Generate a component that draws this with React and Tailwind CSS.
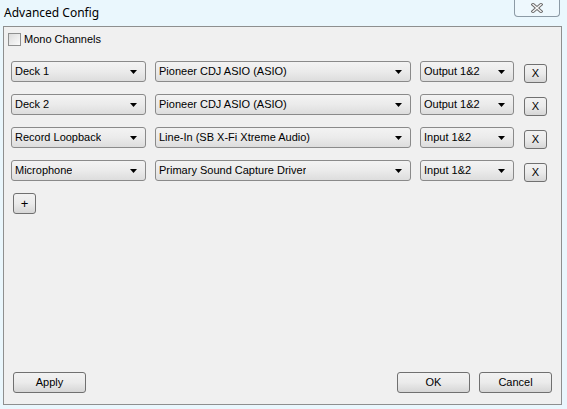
import React from 'react';

const rows = [
  { src: 'Deck 1', dev: 'Pioneer CDJ ASIO (ASIO)', ch: 'Output 1&2' },
  { src: 'Deck 2', dev: 'Pioneer CDJ ASIO (ASIO)', ch: 'Output 1&2' },
  { src: 'Record Loopback', dev: 'Line-In (SB X-Fi Xtreme Audio)', ch: 'Input 1&2' },
  { src: 'Microphone', dev: 'Primary Sound Capture Driver', ch: 'Input 1&2' },
];

function Combo({ label, className }) {
  return (
    <div
      className={`h-[21px] flex items-center justify-between pl-[3px] pr-[8px] border border-[#8a8a8a] rounded-[3px] bg-gradient-to-b from-[#f3f3f3] via-[#ebebeb] to-[#dddddd] text-[11px] text-black ${className}`}
    >
      <span className="truncate">{label}</span>
      <svg width="7" height="4" viewBox="0 0 7 4" className="shrink-0">
        <path d="M0 0 H7 L3.5 4 Z" fill="#000" />
      </svg>
    </div>
  );
}

function Btn({ children, className }) {
  return (
    <div
      className={`flex items-center justify-center border border-[#707070] rounded-[3px] bg-gradient-to-b from-[#f2f2f2] via-[#ebebeb] to-[#d6d6d6] text-[11px] text-black ${className}`}
    >
      {children}
    </div>
  );
}

export default function App() {
  return (
    <div
      className="w-[567px] h-[409px] bg-[#eaf7fd] flex flex-col overflow-hidden"
      style={{ fontFamily: '"Liberation Sans", Arial, sans-serif' }}
    >
      <div className="h-[26px] flex items-start shrink-0">
        <span
          className="ml-[4px] mt-[4px] text-[12px] text-black"
          style={{ fontFamily: '"Noto Sans", sans-serif' }}
        >
          Advanced Config
        </span>
        <div className="ml-auto mr-[7px] w-[46px] h-[17px] border border-t-0 border-[#8c9aa5] rounded-b-[4px] bg-[#eef8fd] flex items-center justify-center">
          <svg width="12" height="10" viewBox="0 0 12 10">
            <path d="M2 1.5 L10 8.5 M10 1.5 L2 8.5" stroke="#6a6a6a" strokeWidth="3.2" strokeLinecap="square" />
            <path d="M2 1.5 L10 8.5 M10 1.5 L2 8.5" stroke="#f6f6f6" strokeWidth="1.4" strokeLinecap="square" />
          </svg>
        </div>
      </div>

      <div className="ml-[3px] w-[559px] h-[379px] border border-[#8e8f8f] bg-[#f0f0f0] flex flex-col">
        <div className="flex items-center h-[13px] ml-[4px] mt-[6px]">
          <div className="w-[13px] h-[13px] border border-[#8e8f8f] bg-gradient-to-br from-[#dcdcdc] to-[#fbfbfb]" />
          <span className="ml-[3px] text-[11px] leading-[13px] text-black">Mono Channels</span>
        </div>

        <div className="flex flex-col gap-[12px] mt-[15px] ml-[7px]">
          {rows.map((r, i) => (
            <div key={i} className="flex items-start h-[21px]">
              <Combo label={r.src} className="w-[135px]" />
              <Combo label={r.dev} className="w-[256px] ml-[9px]" />
              <Combo label={r.ch} className="w-[94px] ml-[9px]" />
              <Btn className="w-[23px] h-[19px] ml-[10px] mt-[3px] shrink-0">X</Btn>
            </div>
          ))}
        </div>

        <Btn className="w-[23px] h-[21px] ml-[9px] mt-[12px] text-[13px]">+</Btn>

        <div className="mt-auto mb-[11px] flex items-center px-[9px]">
          <Btn className="w-[73px] h-[21px]">Apply</Btn>
          <Btn className="w-[73px] h-[21px] ml-auto">OK</Btn>
          <Btn className="w-[73px] h-[21px] ml-[9px]">Cancel</Btn>
        </div>
      </div>
    </div>
  );
}
